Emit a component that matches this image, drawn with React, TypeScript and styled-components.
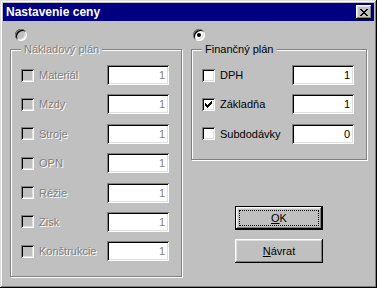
import React from 'react';
import { createGlobalStyle, css, styled } from 'styled-components';

const GlobalStyle = createGlobalStyle`
  html, body {
    margin: 0;
    padding: 0;
    background: #c0c0c0;
  }
  body {
    font-family: 'Liberation Sans', Arial, sans-serif;
    font-size: 11px;
    color: #000;
  }
`;

const sunken = css`
  box-shadow:
    inset 1px 1px 0 #808080,
    inset -1px -1px 0 #ffffff,
    inset 2px 2px 0 #000000,
    inset -2px -2px 0 #dfdfdf;
`;

const raised = css`
  box-shadow:
    inset -1px -1px 0 #000000,
    inset 1px 1px 0 #ffffff,
    inset -2px -2px 0 #808080,
    inset 2px 2px 0 #dfdfdf;
`;

type Row = { label: string; value: string; checked?: boolean };

const costRows: Row[] = [
  { label: 'Materiál', value: '1' },
  { label: 'Mzdy', value: '1' },
  { label: 'Stroje', value: '1' },
  { label: 'OPN', value: '1' },
  { label: 'Réžie', value: '1' },
  { label: 'Zisk', value: '1' },
  { label: 'Konštrukcie', value: '1' },
];

const financeRows: Row[] = [
  { label: 'DPH', value: '1' },
  { label: 'Základňa', value: '1', checked: true },
  { label: 'Subdodávky', value: '0' },
];

const PriceDialog: React.FC = () => {
  return (
    <Window>
      <TitleBar>
        <Title>Nastavenie ceny</Title>
        <CloseButton>
          <svg width="8" height="7" viewBox="0 0 8 7">
            <path d="M0 0h2v1h1v1h2V1h1V0h2v1H7v1H6v1H5v1h1v1h1v1h1v1H6V6H5V5H3v1H2v1H0V6h1V5h1V4h1V3H2V2H1V1H0z" fill="#000" />
          </svg>
        </CloseButton>
      </TitleBar>

      <Body>
        <Column>
          <Radio $disabled $offset={5} />
          <Group $width={172}>
            <Legend $disabled>Nákladový plán</Legend>
            <Rows>
              {costRows.map((row) => (
                <FieldRow key={row.label} $labelWidth={73}>
                  <Check $disabled />
                  <Label $disabled>{row.label}</Label>
                  <ValueBox $disabled>{row.value}</ValueBox>
                </FieldRow>
              ))}
            </Rows>
          </Group>
        </Column>

        <Column>
          <Radio $checked $offset={2} />
          <Group $width={176}>
            <Legend>Finančný plán</Legend>
            <Rows>
              {financeRows.map((row) => (
                <FieldRow key={row.label} $labelWidth={77}>
                  <Check>
                    {row.checked && (
                      <svg width="7" height="7" viewBox="0 0 7 7">
                        <path d="M6 0h1v3H6v1H5v1H4v1H3v1H2V6H1V5H0V2h1v1h1v1h1V3h1V2h1V1h1z" fill="#000" />
                      </svg>
                    )}
                  </Check>
                  <Label>{row.label}</Label>
                  <ValueBox>{row.value}</ValueBox>
                </FieldRow>
              ))}
            </Rows>
          </Group>

          <ButtonStack>
            <DialogButton $default>
              <FocusRing>
                <u>O</u>K
              </FocusRing>
            </DialogButton>
            <DialogButton>
              <span>
                <u>N</u>ávrat
              </span>
            </DialogButton>
          </ButtonStack>
        </Column>
      </Body>
    </Window>
  );
};

const Window = styled.div`
  width: 377px;
  height: 288px;
  box-sizing: border-box;
  padding: 3px;
  background: #c0c0c0;
  display: flex;
  flex-direction: column;
  box-shadow:
    inset -1px -1px 0 #000000,
    inset 1px 1px 0 #dfdfdf,
    inset -2px -2px 0 #808080,
    inset 2px 2px 0 #ffffff;
`;

const TitleBar = styled.div`
  height: 18px;
  background: #000080;
  display: flex;
  align-items: center;
  justify-content: space-between;
  padding: 0 2px 0 3px;
`;

const Title = styled.span`
  color: #fff;
  font-weight: bold;
  font-size: 12px;
`;

const CloseButton = styled.div`
  width: 16px;
  height: 14px;
  background: #c0c0c0;
  display: flex;
  align-items: center;
  justify-content: center;
  ${raised};
`;

const Body = styled.div`
  display: grid;
  grid-template-columns: 172px 176px;
  column-gap: 9px;
  padding: 8px 0 0 7px;
`;

const Column = styled.div`
  display: flex;
  flex-direction: column;
  align-items: flex-start;
`;

const Radio = styled.span<{ $checked?: boolean; $disabled?: boolean; $offset: number }>`
  position: relative;
  width: 12px;
  height: 12px;
  margin-left: ${({ $offset }) => $offset}px;
  border-radius: 50%;
  background: ${({ $disabled }) => ($disabled ? '#c0c0c0' : '#ffffff')};
  box-shadow:
    inset 1px 1px 0 #808080,
    inset -1px -1px 0 #ffffff,
    inset 2px 2px 0 #000000,
    inset -2px -2px 0 #dfdfdf;

  &::after {
    content: '';
    display: ${({ $checked }) => ($checked ? 'block' : 'none')};
    position: absolute;
    left: 4px;
    top: 4px;
    width: 4px;
    height: 4px;
    border-radius: 50%;
    background: #000;
  }
`;

const Group = styled.fieldset<{ $width: number }>`
  width: ${({ $width }) => $width}px;
  box-sizing: border-box;
  margin: 2px 0 0;
  padding: 9px 12px 15px 10px;
  border: 1px solid #808080;
  box-shadow:
    inset 1px 1px 0 #ffffff,
    1px 1px 0 #ffffff;
`;

const Legend = styled.legend<{ $disabled?: boolean }>`
  padding: 0 3px;
  margin-left: 0;
  line-height: 13px;
  background: #c0c0c0;
  color: ${({ $disabled }) => ($disabled ? '#808080' : '#000')};
  text-shadow: ${({ $disabled }) => ($disabled ? '1px 1px 0 #fff' : 'none')};
`;

const Rows = styled.div`
  display: flex;
  flex-direction: column;
  gap: 9.4px;
`;

const FieldRow = styled.div<{ $labelWidth: number }>`
  display: grid;
  grid-template-columns: 13px ${({ $labelWidth }) => $labelWidth}px 62px;
  align-items: center;
  height: 20px;
`;

const Check = styled.span<{ $disabled?: boolean }>`
  width: 13px;
  height: 13px;
  box-sizing: border-box;
  display: flex;
  align-items: center;
  justify-content: center;
  background: ${({ $disabled }) => ($disabled ? '#c0c0c0' : '#ffffff')};
  ${sunken};
`;

const Label = styled.span<{ $disabled?: boolean }>`
  padding-left: 5px;
  white-space: nowrap;
  color: ${({ $disabled }) => ($disabled ? '#808080' : '#000')};
  text-shadow: ${({ $disabled }) => ($disabled ? '1px 1px 0 #fff' : 'none')};
`;

const ValueBox = styled.div<{ $disabled?: boolean }>`
  height: 20px;
  box-sizing: border-box;
  padding: 0 4px;
  display: flex;
  align-items: center;
  justify-content: flex-end;
  background: #fff;
  color: ${({ $disabled }) => ($disabled ? '#808080' : '#000')};
  ${sunken};
`;

const ButtonStack = styled.div`
  align-self: stretch;
  display: flex;
  flex-direction: column;
  align-items: center;
  gap: 9px;
  margin-top: 46px;
`;

const DialogButton = styled.div<{ $default?: boolean }>`
  width: 88px;
  height: 24px;
  box-sizing: border-box;
  display: flex;
  align-items: center;
  justify-content: center;
  background: #c0c0c0;
  ${({ $default }) =>
    $default
      ? css`
          border: 1px solid #000;
          padding: 3px;
        `
      : ''}
  ${raised};
`;

const FocusRing = styled.span`
  flex: 1;
  align-self: stretch;
  display: flex;
  align-items: center;
  justify-content: center;
  border: 1px dotted #000;
`;

export default function App() {
  return (
    <>
      <GlobalStyle />
      <PriceDialog />
    </>
  );
}
